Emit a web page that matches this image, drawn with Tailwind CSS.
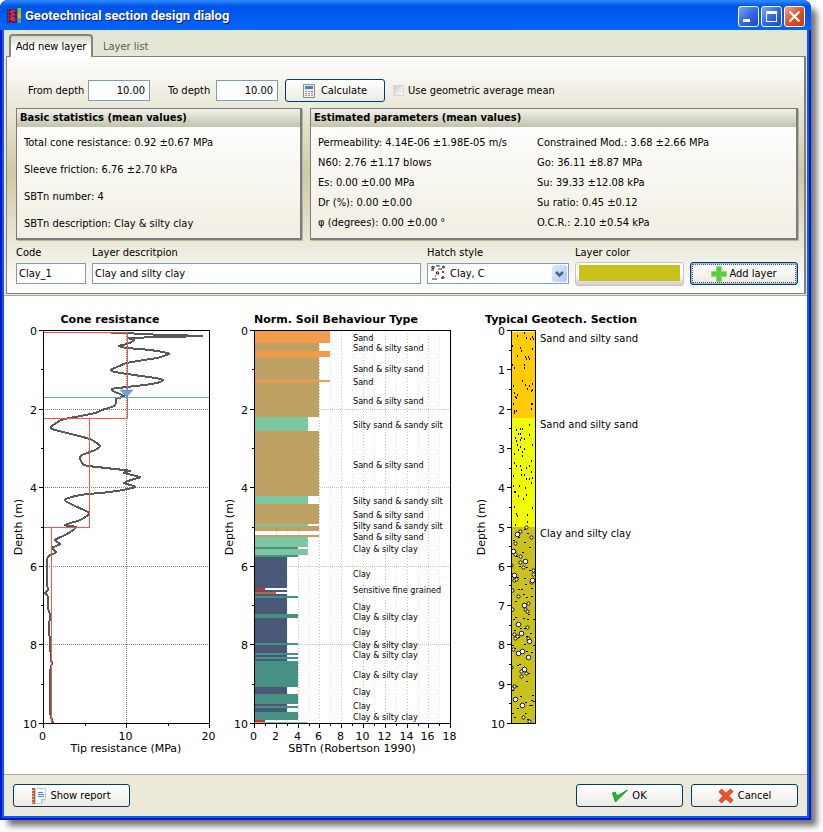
<!DOCTYPE html>
<html lang="en">
<head>
  <meta charset="UTF-8">
  <meta name="viewport" content="width=device-width, initial-scale=1.0">
  <title>Geotechnical section design dialog</title>
  <script src="https://cdn.jsdelivr.net/npm/@tailwindcss/browser@4"></script>
</head>
<body class="bg-white min-h-screen flex pr-3 pb-3 text-[11px] leading-4 text-black font-['DejaVu_Sans_Condensed','DejaVu_Sans',sans-serif]">
  <div class="flex-1 flex flex-col rounded-t-lg bg-[#0019cf] shadow-[7px_7px_6px_-1px_rgba(0,0,0,0.55)]">

    <!-- Title bar -->
    <header class="h-[30px] shrink-0 flex items-center gap-1 rounded-t-lg pl-[7px] pr-1.5 pt-0.5 bg-linear-to-b from-[#2b86ff] from-3% via-[#0053e6] via-20% to-[#0364ff]">
      <svg class="w-3.5 h-4 shrink-0" viewBox="0 0 14 16">
        <path d="M0 1h10v14H0z" fill="#3a1a7e" />
        <path d="M1.500 1v14M4.500 1v14M0 3.500h10M0 7.500h10M0 11.500h10" stroke="#7a3040" />
        <path d="M8 2L4 4l3 2-3 2 3 2-3 1 4 2" fill="none" stroke="#ff2a2a" stroke-width="1.500" />
        <path d="M10.500 0H14v5h-3.500z" fill="#5fd13a" />
        <path d="M10.500 5H14v5h-3.500z" fill="#f5a623" />
        <path d="M10.500 10H14v5h-3.500z" fill="#35b36b" />
      </svg>
      <h1 class="flex-1 text-[13px] font-bold text-white font-['Roboto',sans-serif] [text-shadow:1px_1px_0_#0a1883]">Geotechnical section design dialog</h1>
      <div class="flex gap-0.5">
        <button aria-label="Minimize" class="w-[21px] h-[21px] rounded-[3px] border border-white bg-linear-to-br from-[#7fa5f5] via-[#3468e8] to-[#1c48c8]">
          <svg class="w-full h-full" viewBox="0 0 19 19"><path d="M4 12h7v3H4z" fill="#fff" /></svg>
        </button>
        <button aria-label="Maximize" class="w-[21px] h-[21px] rounded-[3px] border border-white bg-linear-to-br from-[#7fa5f5] via-[#3468e8] to-[#1c48c8]">
          <svg class="w-full h-full" viewBox="0 0 19 19"><path d="M4 4h11v11H4zM5 7v7h9V7z" fill="#fff" fill-rule="evenodd" /></svg>
        </button>
        <button aria-label="Close" class="w-[21px] h-[21px] rounded-[3px] border border-white bg-linear-to-br from-[#f0a088] via-[#e0502c] to-[#c03a10]">
          <svg class="w-full h-full" viewBox="0 0 19 19"><path d="M4.500 4.500l10 10M14.500 4.500l-10 10" stroke="#fff" stroke-width="2.400" /></svg>
        </button>
      </div>
    </header>

    <main class="flex-1 flex flex-col mx-0.5 mb-0.5 border-2 border-t-0 border-[#0f5ce8] bg-[#ece9d8]">
      <!-- Tabs -->
      <nav class="h-[26px] shrink-0 flex items-end pl-[5px] bg-[#e3e5d5]">
        <button class="relative h-[23px] -mb-px w-[84px] rounded-t border-2 border-b-0 border-[#85857d] bg-linear-to-b from-[#d9dacb] to-white to-60% text-center whitespace-nowrap">Add new layer</button>
        <button class="h-[23px] px-2.5 pt-1 text-[#5c5c5c]">Layer list</button>
      </nav>

      <section class="h-[238px] shrink-0 ml-0.5 mr-px pl-[9px] pr-1.5 border border-[#808080] border-r-2 bg-linear-to-b from-white via-[#cfc9a4] to-white">
        <form class="flex items-center h-[51px] pt-4">
          <label for="from" class="w-[72px] pl-3">From depth</label>
          <input id="from" value="10.00" class="w-[62px] h-[21px] border border-[#7f9db9] bg-white px-1 text-right">
          <label for="to" class="w-[66px] pl-[18px]">To depth</label>
          <input id="to" value="10.00" class="w-[62px] h-[21px] border border-[#7f9db9] bg-white px-1 text-right">
          <button type="button" class="ml-[7px] w-[100px] h-[23px] flex items-center justify-center gap-1.5 rounded-[3px] border border-[#003c74] bg-linear-to-b from-white to-[#ecebe5]">
            <svg class="w-3 h-3.5" viewBox="0 0 12 14">
              <path d="M.5.5h11v13H.5z" fill="#f0f0f0" stroke="#8c8c8c" />
              <path d="M2 2h8v3H2z" fill="#4b7cc4" />
              <path d="M2 7.500h2M5 7.500h2M2 9.500h2M5 9.500h2M8 9.500h2M2 11.500h2M5 11.500h2M8 11.500h2" stroke="#9b9ba5" />
              <path d="M8 7.500h2" stroke="#e04a3a" />
            </svg>
            Calculate
          </button>
          <input id="geo" type="checkbox" class="appearance-none ml-2 w-[11px] h-[11px] border border-[#dad8cc] bg-linear-to-br from-[#c9ccd3] to-white">
          <label for="geo" class="pl-1">Use geometric average mean</label>
        </form>

        <div class="flex gap-2">
          <div class="w-[286px] h-[132px] border-2 border-t border-l border-[#7b7b7b] bg-linear-to-b from-white to-[#f1efe2] shadow-[1px_1px_0_#b8b6a4]">
            <h2 class="h-[18px] pl-[3px] font-bold leading-[18px] bg-linear-to-b from-[#f2f2ec] to-[#c2c3ac]">Basic statistics (mean values)</h2>
            <ul class="pl-[7px] pt-0.5 leading-[27px]">
              <li>Total cone resistance: 0.92 ±0.67 MPa</li>
              <li>Sleeve friction: 6.76 ±2.70 kPa</li>
              <li>SBTn number: 4</li>
              <li>SBTn description: Clay &amp; silty clay</li>
            </ul>
          </div>
          <div class="flex-1 h-[132px] border-2 border-t border-l border-[#7b7b7b] bg-linear-to-b from-white to-[#f1efe2] shadow-[1px_1px_0_#b8b6a4]">
            <h2 class="h-[18px] pl-[3px] font-bold leading-[18px] bg-linear-to-b from-[#f2f2ec] to-[#c2c3ac]">Estimated parameters (mean values)</h2>
            <div class="flex pl-[7px] pt-1.5 leading-5">
              <ul class="w-[219px]">
                <li>Permeability: 4.14E-06 ±1.98E-05 m/s</li>
                <li>N60: 2.76 ±1.17 blows</li>
                <li>Es: 0.00 ±0.00 MPa</li>
                <li>Dr (%): 0.00 ±0.00</li>
                <li>φ (degrees): 0.00 ±0.00 °</li>
              </ul>
              <ul>
                <li>Constrained Mod.: 3.68 ±2.66 MPa</li>
                <li>Go: 36.11 ±8.87 MPa</li>
                <li>Su: 39.33 ±12.08 kPa</li>
                <li>Su ratio: 0.45 ±0.12</li>
                <li>O.C.R.: 2.10 ±0.54 kPa</li>
              </ul>
            </div>
          </div>
        </div>

        <form class="flex items-start gap-1.5 pt-[5px]">
          <div class="w-[70px]">
            <label for="code" class="block h-[18px]">Code</label>
            <input id="code" value="Clay_1" class="block w-full h-[21px] border border-[#7f9db9] bg-white px-0.5">
          </div>
          <div class="flex-1">
            <label for="desc" class="block h-[18px]">Layer descritpion</label>
            <input id="desc" value="Clay and silty clay" class="block w-full h-[21px] border border-[#7f9db9] bg-white px-0.5">
          </div>
          <div class="w-[142px]">
            <label for="hatch" class="block h-[18px]">Hatch style</label>
            <div class="relative">
              <select id="hatch" class="appearance-none block w-full h-[21px] border border-[#7f9db9] bg-white pl-[22px]">
                <option>Clay, C</option>
              </select>
              <svg class="absolute left-1 top-0.5 w-4 h-4 pointer-events-none" viewBox="0 0 16 16">
                <path d="M5 1h4M0 5h3M7 4h4M1 14h5M4 11h1M10 13h1" stroke="#222" />
                <g fill="#f0a040" stroke="#222">
                  <circle cx="2" cy="2.500" r="1.300" /><circle cx="12.500" cy="2" r="1" /><circle cx="6.500" cy="8" r="1.300" /><circle cx="12" cy="7" r=".7" /><circle cx="12" cy="12.500" r="1" />
                </g>
              </svg>
              <svg class="absolute right-0.5 top-0.5 w-[15px] h-[17px] rounded-xs bg-linear-to-br from-[#dfe9ff] to-[#b2c8f8] pointer-events-none" viewBox="0 0 15 17">
                <path d="M4 7l3.500 3.500L11 7" fill="none" stroke="#4d6185" stroke-width="2.500" />
              </svg>
            </div>
          </div>
          <div class="w-[109px]">
            <label for="color" class="block h-[17px]">Layer color</label>
            <input id="color" type="color" value="#cbc11c" class="block w-full h-6 rounded-[3px] border border-[#c6c6c6] bg-linear-to-b from-white via-white to-[#cfcfcf] px-[3px] pt-0.5 pb-1 [&::-webkit-color-swatch-wrapper]:p-0 [&::-webkit-color-swatch]:border-0">
          </div>
          <button type="button" class="mt-[17px] w-[108px] h-[23px] p-px rounded-[3px] border border-[#003c74] bg-[#98b8ea]">
            <span class="flex w-full h-full items-center justify-center gap-0.5 border border-dotted border-[#555] bg-linear-to-b from-white to-[#ecebe5]">
              <svg class="w-4 h-4" viewBox="0 0 16 16"><path d="M5.500.5h5v5h5v5h-5v5h-5v-5h-5v-5h5z" fill="#5ccb3c" stroke="#8fdc78" /></svg>
              Add layer
            </span>
          </button>
        </form>
      </section>

      <!-- Charts -->
      <section class="flex-1 flex mt-px pl-2 pt-3 border-y border-[#aca899] bg-white font-['DejaVu_Sans',sans-serif]">
        <svg id="cone" class="w-[210px] h-[450px] shrink-0" viewBox="-31 -22 210 450"></svg>
        <svg id="sbt" class="w-[240px] h-[450px] shrink-0" viewBox="-32 -22 240 450"></svg>
        <svg id="column" class="w-[200px] h-[450px] shrink-0" viewBox="-49 -22 200 450"></svg>
      </section>

      <footer class="h-[41px] shrink-0 flex items-center gap-2 px-[9px]">
        <button class="w-[117px] h-[23px] flex items-center justify-center gap-1 rounded-[3px] border border-[#003c74] bg-linear-to-b from-white to-[#ecebe5]">
          <svg class="w-3.5 h-4" viewBox="0 0 14 16">
            <path d="M3.500.5h10v11l-4 4h-6z" fill="#f4f8fc" stroke="#c3ccd6" />
            <path d="M13.500 11.500h-4v4" fill="#dde3ea" stroke="#b7c0ca" />
            <path d="M0 0h3v16H0z" fill="#b5623a" />
            <path d="M0 2.500h2M0 5.500h2M0 8.500h2M0 11.500h2M0 14.500h2" stroke="#e8c0a0" />
            <path d="M6 4.500h5M6 6.500h6M6 8.500h6" stroke="#4a80e0" />
          </svg>
          Show report
        </button>
        <button class="ml-auto w-[107px] h-[23px] flex items-center justify-center gap-1 rounded-[3px] border border-[#003c74] bg-linear-to-b from-white to-[#ecebe5]">
          <svg class="w-4 h-3.5" viewBox="0 0 16 14"><path d="M.5 4l2.500-1 2 4L15.500 1 6 10.500 3.500 13z" fill="#22c026" stroke="#157a1c" stroke-width=".8" /></svg>
          OK
        </button>
        <button class="w-[107px] h-[23px] flex items-center justify-center gap-1 rounded-[3px] border border-[#003c74] bg-linear-to-b from-white to-[#ecebe5]">
          <svg class="w-4 h-4" viewBox="0 0 16 16"><path d="M3.500 1L8 5.200 12.500 1 15 3.500 10.600 8 15 12l-2.500 3L8 10.800 3.500 15 1 12.500 5.200 8 1 4z" fill="#f4502c" stroke="#c2381a" stroke-width=".8" /></svg>
          Cancel
        </button>
      </footer>
    </main>
  </div>

  <script>
    const H = 393;
    const line = (x1, y1, x2, y2, extra = 'stroke="#000"') => `<line x1="${x1}" y1="${y1}" x2="${x2}" y2="${y2}" shape-rendering="crispEdges" ${extra}/>`;
    const rect = (x, y, w, h, fill) => `<rect x="${x}" y="${y}" width="${w}" height="${h}" fill="${fill}" shape-rendering="crispEdges"/>`;
    const text = (x, y, s, size = 10, extra = '') => `<text x="${x}" y="${y}" font-size="${size}" ${extra}>${s}</text>`;
    const title = (x, s) => text(x, -7, s, 11, 'text-anchor="middle" font-weight="bold"');

    // frame, depth axis and its title
    function depthAxis(w, step, labelX) {
      let s = `<rect x=".5" y=".5" width="${w}" height="${H}" fill="none" stroke="#000" shape-rendering="crispEdges"/>`;
      for (let d = 0; d <= 10; d += step / 2) {
        const y = Math.round(d * 39.3) + 0.5;
        const major = d % step === 0;
        s += line(major ? -4 : -2, y, 0, y);
        if (major) s += text(-6, y + 4, d, 11, 'text-anchor="end"');
      }
      return s + `<text transform="translate(${labelX} 197) rotate(-90)" font-size="11" text-anchor="middle">Depth (m)</text>`;
    }

    // rounded curve through the readings
    function curve(pts) {
      let d = `M${pts[0]}`;
      for (let i = 0; i < pts.length - 1; i++) {
        const p0 = pts[i - 1] || pts[i], p1 = pts[i], p2 = pts[i + 1], p3 = pts[i + 2] || p2;
        const c1 = [p1[0] + (p2[0] - p0[0]) / 8, p1[1] + (p2[1] - p0[1]) / 8];
        const c2 = [p2[0] - (p3[0] - p1[0]) / 8, p2[1] - (p3[1] - p1[1]) / 8];
        d += `C${c1} ${c2} ${p2}`;
      }
      return d;
    }

    // cone resistance
    const trace = '67,3 84,3 96,4 123,5 158,6 122,7 86,8 90,10 83,14 75,16 83,18 96,19 113,21 123,23 125,24 113,28 100,30 83,33 73,37 67,40 71,42 90,45 111,48 119,50 113,53 100,55 83,57 68,59 71,62 80,66 72,69 72,72 70,76 58,80 51,83 26,88 17,90 7,97 11,100 35,106 48,110 56,116 51,120 38,125 36,128 40,135 53,137 80,140 86,141 80,143 96,147 90,149 80,153 91,157 66,162 36,165 21,170 31,176 45,183 36,190 21,195 32,197 23,204 11,210 16,214 8,218 12,222 5,226 3,230 3,253 4,260 1,263 4,267 4,278 6,285 5,297 6,313 7,330 8,333 6,343 6,373 6,383 9,393';
    let s = title(67, 'Cone resistance');
    const grid = 'stroke="#808080" stroke-dasharray="1 1"';
    [79, 157, 236, 314].forEach(y => s += line(0, y + 0.5, 166, y + 0.5, grid));
    s += line(83.5, 0, 83.5, H, grid);
    s += `<path d="${curve(trace.split(' ').map(p => p.split(',').map(Number)))}" transform="translate(1 0)" fill="none" stroke="#5a5a5a" stroke-width="2" shape-rendering="crispEdges"/>`;
    s += '<path d="M0 2.500H84.500V88.500H0M46.500 88.500V197.500H0M8.500 197.500V393" fill="none" stroke="#ff5050" shape-rendering="crispEdges"/>';
    s += line(0, 67.5, 166, 67.5, 'stroke="#6f9fd8"');
    s += '<path d="M77 60h13l-6.500 7z" fill="#6f9fd8" stroke="#4d84c4" stroke-width=".5"/>';
    s += depthAxis(166, 2, -21);
    [0, 41.5, 83, 124.5, 166].forEach((x, i) => {
      const px = Math.round(x) + 0.5;
      s += line(px, H, px, H + (i % 2 ? 3 : 5));
      if (i % 2 === 0) s += text(px - 1, H + 17, i * 5, 11, 'text-anchor="middle"');
    });
    s += text(83, H + 29, 'Tip resistance (MPa)', 11, 'text-anchor="middle"');
    document.getElementById('cone').innerHTML = s;

    // soil behaviour type: [from, to, class]
    const colors = { 1: '#e02a1e', 2: '#b5683f', 3: '#4a5878', 4: '#469184', 5: '#7cc6a0', 6: '#bfa163', 7: '#f29b4c' };
    const bars = [[0,13,7],[13,21,6],[21,27,7],[27,50,6],[50,52,7],[52,87,6],[87,101,5],[101,166,6],[166,174,5],[174,194,6],[194,196,5],[196,201,6],[205,207,6],[207,217,5],[217,219,4],[219,225,5],[225,227,4],[227,258,3],[258,260,1],[260,262,3],[262,264,2],[264,266,3],[266,268,4],[268,284,3],[284,288,4],[288,313,3],[313,315,4],[315,323,3],[323,325,4],[325,327,3],[327,329,4],[329,331,3],[331,357,4],[357,364,3],[364,374,4],[374,376,3],[376,378,4],[378,382,3],[382,390,4],[390,392,1],[392,393,5]];
    const sand = 'Sand &amp; silty sand', silt = 'Silty sand &amp; sandy silt', siltyClay = 'Clay &amp; silty clay';
    const names = [[8,'Sand'],[18,sand],[39,sand],[52,'Sand'],[71,sand],[95,silt],[135,sand],[171,silt],[185,sand],[196,silt],[207,sand],[219,siltyClay],[244,'Clay'],[260,'Sensitive fine grained'],[277,'Clay'],[287,siltyClay],[302,'Clay'],[315,siltyClay],[325,siltyClay],[345,siltyClay],[362,'Clay'],[376,'Clay'],[387,siltyClay]];
    s = title(82, 'Norm. Soil Behaviour Type');
    for (let i = 1; i < 18; i++) {
      const x = Math.round(i * 10.9) + 0.5;
      s += line(x, 0, x, H, `stroke="${i % 2 ? '#e2e2e2' : '#c4c4c4'}" stroke-dasharray="1 2"`);
    }
    [79, 157, 236, 314].forEach(y => s += line(0, y + 0.5, 196, y + 0.5, 'stroke="#c4c4c4" stroke-dasharray="1 1"'));
    bars.forEach(([a, b, v]) => s += rect(0, a, Math.floor(v * 10.9 + 0.4), b - a, colors[v]));
    names.forEach(([y, n]) => s += text(99, y + 3, n, 9, `class="font-['DejaVu_Sans_Condensed','DejaVu_Sans',sans-serif]"`));
    s += depthAxis(196, 2, -21);
    for (let i = 0; i <= 18; i++) {
      const x = Math.round(i * 10.9) + 0.5;
      s += line(x, H, x, H + (i % 2 ? 3 : 5));
      if (i % 2 === 0) s += text(x - 1, H + 17, i, 11, 'text-anchor="middle"');
    }
    s += text(98, H + 29, 'SBTn (Robertson 1990)', 11, 'text-anchor="middle"');
    document.getElementById('sbt').innerHTML = s;

    // typical section
    const specks = [[13,2],[6,5],[21,6],[15,7],[19,8],[22,8],[1,15],[9,17],[21,18],[10,20],[6,25],[14,26],[17,26],[18,28],[15,28],[1,34],[13,34],[13,37],[3,37],[11,50],[2,55],[21,53],[18,55],[14,54],[21,59],[20,60],[16,58],[3,62],[6,64],[4,66],[5,67],[2,73],[21,73],[20,73],[20,78],[3,80],[3,82],[5,80],
      [18,94],[5,99],[9,98],[11,98],[7,103],[9,103],[18,104],[4,107],[10,107],[5,110],[9,109],[13,108],[6,114],[21,114],[9,116],[13,118],[7,119],[3,123],[11,125],[11,121],[20,130],[3,132],[9,135],[5,135],[15,137],[18,135],[10,139],[2,145],[20,141],[13,144],[10,144],[15,148],[18,148],[21,147],[20,152],[2,155],[8,155],[14,157],[3,161],[4,161],[15,164],[7,165],[12,168],[3,176],[21,177],[5,183],[16,184],[6,185],[16,191],[4,194]];
    const dashes = [[16,203],[13,199],[7,207],[2,210],[13,212],[18,217],[11,222],[5,226],[8,236],[15,237],[18,240],[6,247],[13,248],[14,254],[7,259],[10,259],[20,258],[15,267],[20,266],[12,264],[4,271],[12,273],[17,284],[2,289],[4,287],[12,288],[16,289],[22,289],[13,298],[3,300],[9,298],[19,303],[7,307],[15,306],[1,315],[13,314],[22,315],[3,318],[15,321],[20,322],[8,334],[6,335],[17,343],[15,351],[1,360],[5,356],[9,366],[21,365],[20,370],[22,371],[14,372],[18,375],[20,375],[6,378],[14,383],[1,383],[16,389],[3,387]];
    const stones = [[6,204,1],[9,201],[15,197],[20,207],[4,213],[2,221,1],[4,224],[9,226],[9,232],[14,231,1],[12,237],[0,235],[22,240],[22,244],[3,245,1],[3,250],[5,249],[20,252],[21,250,1],[1,260],[7,266],[17,273],[14,279],[16,281],[13,275,1],[1,279],[7,294,1],[16,297],[3,304],[4,308],[6,306],[10,303,1],[17,308],[18,311,1],[2,319],[7,323,1],[11,321,1],[17,327,1],[0,337],[10,341],[15,343],[13,339,1],[10,346],[3,356],[1,358],[4,369,1],[11,375,1],[12,387],[18,391]];
    s = title(50, 'Typical Geotech. Section');
    s += rect(0, 2, 24, 86, '#ffcc00') + rect(0, 88, 24, 109, '#f0ff00') + rect(0, 197, 24, 196, '#cbc11c');
    s += '<clipPath id="pile"><rect width="24" height="393"/></clipPath><g clip-path="url(#pile)">';
    specks.forEach(([x, y]) => s += rect(x, y, 1, 2, '#000'));
    dashes.forEach(([x, y]) => s += rect(x, y, 2, 1, '#000'));
    stones.forEach(([x, y, big]) => s += `<circle cx="${x + 0.5}" cy="${y + 0.5}" r="${big ? 2.3 : 1.6}" fill="#fff" stroke="#000" stroke-width=".9"/>`);
    s += '</g>' + depthAxis(24, 1, -26);
    s += text(29, 12, 'Sand and silty sand') + text(29, 98, 'Sand and silty sand') + text(29, 207, 'Clay and silty clay');
    document.getElementById('column').innerHTML = s;
  </script>
</body>
</html>
